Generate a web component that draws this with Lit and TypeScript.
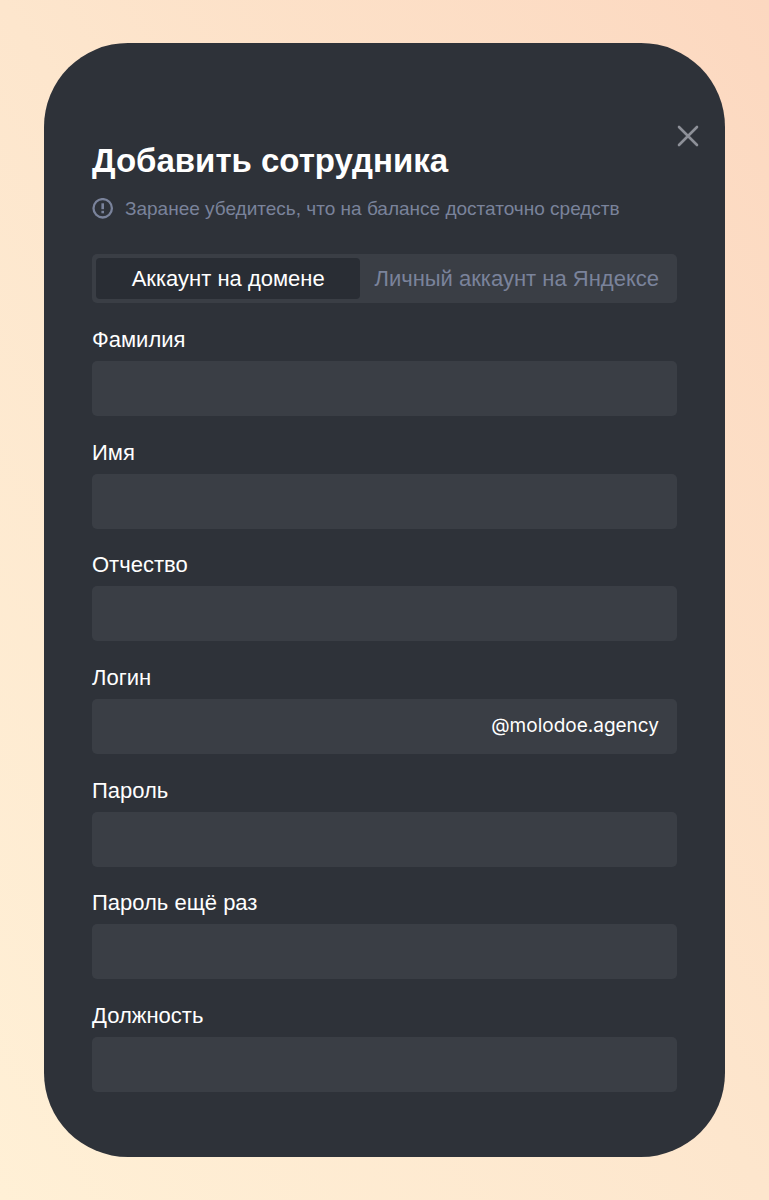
import { LitElement, html, css, nothing } from "lit";
import { customElement, state } from "lit/decorators.js";

interface Field {
  id: string;
  label: string;
  type: "text" | "password";
  suffix?: string;
}

const FIELDS: Field[] = [
  { id: "last-name", label: "Фамилия", type: "text" },
  { id: "first-name", label: "Имя", type: "text" },
  { id: "middle-name", label: "Отчество", type: "text" },
  { id: "login", label: "Логин", type: "text", suffix: "@molodoe.agency" },
  { id: "password", label: "Пароль", type: "password" },
  { id: "password-repeat", label: "Пароль ещё раз", type: "password" },
  { id: "position", label: "Должность", type: "text" },
];

const TABS = ["Аккаунт на домене", "Личный аккаунт на Яндексе"];

@customElement("app-root")
export class AppRoot extends LitElement {
  static styles = css`
    :host {
      display: flex;
      box-sizing: border-box;
      min-height: 100vh;
      padding: 43px 44px;
      background: linear-gradient(to top right, #fff0d6 0%, #fde6cd 50%, #fcd8c0 100%);
      font-family: "Liberation Sans", Arial, sans-serif;
      color: #fff;
    }
    .card {
      flex: 1;
      min-width: 0;
      display: flex;
      flex-direction: column;
      box-sizing: border-box;
      padding: 82px 48px 65px;
      border-radius: 84px;
      background: #2e3239;
    }
    .close {
      align-self: flex-end;
      display: block;
      width: 22px;
      height: 22px;
      margin: 0 -22px 0 0;
      padding: 0;
      border: 0;
      background: none;
      color: #8d9098;
      cursor: pointer;
    }
    .icon {
      display: block;
      flex: none;
      width: 22px;
      height: 22px;
    }
    .title {
      margin: 0;
      font-size: 33px;
      line-height: 28px;
      font-weight: 700;
    }
    .hint {
      display: flex;
      align-items: center;
      gap: 11px;
      margin: 22px 0 0;
      font-size: 19px;
      line-height: 24px;
      color: #7a839b;
    }
    .tabs {
      display: flex;
      margin-top: 33px;
      padding: 4px;
      border-radius: 5px;
      background: #3a3e45;
    }
    .tab {
      flex: none;
      padding: 0 14px;
      border: 0;
      border-radius: 4px;
      background: none;
      font: inherit;
      font-size: 22px;
      line-height: 41px;
      color: #7a839b;
      cursor: pointer;
    }
    .tab:first-child {
      flex: 1;
    }
    .tab.active {
      background: #292d34;
      color: #fff;
    }
    .form {
      flex: 1;
      display: flex;
      flex-direction: column;
      justify-content: space-between;
      gap: 20px;
      margin-top: 24px;
    }
    .label {
      display: block;
      margin-bottom: 8px;
      font-size: 22px;
      line-height: 26px;
    }
    .box {
      display: flex;
      align-items: center;
      height: 55px;
      border-radius: 5px;
      background: #3a3e45;
    }
    .input {
      flex: 1;
      min-width: 0;
      height: 100%;
      box-sizing: border-box;
      padding: 0 18px;
      border: 0;
      outline: 0;
      background: none;
      font: inherit;
      font-size: 22px;
      color: inherit;
    }
    .suffix {
      padding-right: 18px;
      font-family: Inter, sans-serif;
      font-size: 19px;
      line-height: 24px;
    }
  `;

  @state() private activeTab = 0;

  private renderField(field: Field) {
    return html`
      <div class="field">
        <label class="label" for=${field.id}>${field.label}</label>
        <div class="box">
          <input class="input" id=${field.id} type=${field.type} />
          ${field.suffix ? html`<span class="suffix">${field.suffix}</span>` : nothing}
        </div>
      </div>
    `;
  }

  render() {
    return html`
      <main class="card">
        <button class="close" type="button" aria-label="Закрыть">
          <svg class="icon" viewBox="0 0 22 22" fill="none" stroke="currentColor" stroke-width="2.6" stroke-linecap="round">
            <path d="M2 2 20 20M20 2 2 20" />
          </svg>
        </button>
        <h1 class="title">Добавить сотрудника</h1>
        <p class="hint">
          <svg class="icon" viewBox="0 0 22 22" fill="none" stroke="currentColor" aria-hidden="true">
            <circle cx="10.7" cy="10.3" r="9.2" stroke-width="2.3" />
            <path d="M10.7 5.3V11.2" stroke-width="2.6" />
            <path d="M10.7 12.8V15.3" stroke-width="2.6" />
          </svg>
          <span>Заранее убедитесь, что на балансе достаточно средств</span>
        </p>
        <div class="tabs" role="tablist">
          ${TABS.map(
            (tab, i) => html`
              <button
                class=${i === this.activeTab ? "tab active" : "tab"}
                type="button"
                role="tab"
                aria-selected=${i === this.activeTab ? "true" : "false"}
                @click=${() => (this.activeTab = i)}
              >${tab}</button>
            `,
          )}
        </div>
        <form class="form">${FIELDS.map((field) => this.renderField(field))}</form>
      </main>
    `;
  }
}
